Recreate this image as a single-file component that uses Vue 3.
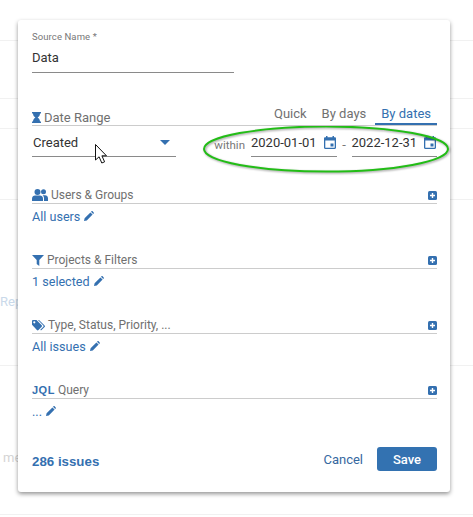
<script setup>
const sections = [
  { icon: 'users', label: 'Users & Groups', value: 'All users' },
  { icon: 'filter', label: 'Projects & Filters', value: '1 selected' },
  { icon: 'tags', label: 'Type, Status, Priority, ...', value: 'All issues' },
  { icon: 'jql', label: 'Query', value: '...' }
]
</script>

<template>
  <div class="page">
    <div class="bg">
      <div class="bg-row h40"></div>
      <div class="bg-row h58"></div>
      <div class="bg-row h30"></div>
      <div class="bg-row h71"></div>
      <div class="bg-row h166"><span class="ghost rep">Rep</span></div>
      <div class="bg-row h149"><span class="ghost me">me</span></div>
    </div>

    <div class="card">
      <label class="small-label">Source Name *</label>
      <div class="name-input">Data</div>

      <div class="range-head">
        <div class="range-title">
          <svg class="hourglass" width="9" height="11" viewBox="0 0 9 11"><path d="M0 0h9v1.400H8c0 2-1 3.200-2.400 4.100C7 6.400 8 7.600 8 9.600h1V11H0V9.600h1c0-2 1-3.200 2.400-4.100C2 4.600 1 3.400 1 1.400H0z"/></svg>
          <span>Date Range</span>
        </div>
        <div class="tabs">
          <span class="tab">Quick</span>
          <span class="tab">By days</span>
          <span class="tab active">By dates</span>
        </div>
      </div>

      <div class="range-row">
        <div class="select">
          <span>Created</span>
          <svg width="10" height="5" viewBox="0 0 10 5"><path d="M0 0h10L5 5z"/></svg>
        </div>
        <div class="dates">
          <span class="within">within</span>
          <div class="date">
            <span>2020-01-01</span>
            <svg class="cal" width="12" height="13" viewBox="0 0 12 13"><path d="M2 0h1.500v1.300h5V0H10v1.300h.8c.7 0 1.200.5 1.200 1.200v9.300c0 .7-.5 1.200-1.200 1.200H1.200C.5 13 0 12.500 0 11.800V2.500c0-.7.500-1.200 1.200-1.200H2zM1.300 4.500v7.200h9.400V4.500zM6.500 7.500h3v3h-3z" fill-rule="evenodd"/></svg>
          </div>
          <span class="dash">-</span>
          <div class="date">
            <span>2022-12-31</span>
            <svg class="cal" width="12" height="13" viewBox="0 0 12 13"><path d="M2 0h1.500v1.300h5V0H10v1.300h.8c.7 0 1.200.5 1.200 1.200v9.300c0 .7-.5 1.200-1.200 1.200H1.200C.5 13 0 12.500 0 11.800V2.500c0-.7.500-1.200 1.200-1.200H2zM1.300 4.500v7.200h9.400V4.500zM6.500 7.500h3v3h-3z" fill-rule="evenodd"/></svg>
          </div>
        </div>
      </div>

      <div class="sections">
        <section v-for="s in sections" :key="s.label" class="section">
          <div class="section-head">
            <svg v-if="s.icon === 'users'" class="ico" width="16" height="12" viewBox="0 0 16 12"><circle cx="5.500" cy="3" r="3"/><circle cx="11.500" cy="2.800" r="2.500"/><path d="M0 12V9.500C0 7.500 1.500 6.500 3 6.500h5c1.500 0 3 1 3 3V12z"/><path d="M12 12V9.300c0-1.200-.5-2.200-1.400-3H13c1.700 0 3 1.200 3 2.900V12z"/></svg>
            <svg v-else-if="s.icon === 'filter'" class="ico" width="12" height="11" viewBox="0 0 12 11"><path d="M0 0h12L7.300 5v6L4.700 9V5z"/></svg>
            <svg v-else-if="s.icon === 'tags'" class="ico" width="13" height="11" viewBox="0 0 13 11"><path d="M0 1.200C0 .5.500 0 1.200 0h3.300l5.200 5.200c.5.500.5 1.100 0 1.600l-3.200 3.200c-.5.500-1.100.5-1.600 0L0 4.700zM2.300 3.400a1.100 1.100 0 1 0 0-2.200 1.100 1.100 0 0 0 0 2.200z" fill-rule="evenodd"/><path d="M6 0h1l5.600 5.500c.5.500.5 1.100 0 1.600L9 10.500l-.7-.7 3-3c.4-.4.400-.8 0-1.200z"/></svg>
            <b v-else class="jql">JQL</b>
            <span>{{ s.label }}</span>
            <svg class="plus" width="9" height="9" viewBox="0 0 9 9"><rect width="9" height="9" rx="1.500"/><path d="M3.800 2h1.400v1.800H7v1.400H5.200V7H3.800V5.200H2V3.800h1.800z" fill="#fff"/></svg>
          </div>
          <div class="section-value">
            <span>{{ s.value }}</span>
            <svg class="pen" width="10" height="10" viewBox="0 0 10 10"><path d="M0 10l.6-2.800L6.400 1.400l2.200 2.200L2.800 9.400zM7 .8l.5-.5c.3-.3.800-.3 1.100 0l1.100 1.100c.3.300.3.800 0 1.100l-.5.500z"/></svg>
          </div>
        </section>
      </div>

      <div class="footer">
        <b class="count">286 issues</b>
        <div class="actions">
          <span class="cancel">Cancel</span>
          <span class="save">Save</span>
        </div>
      </div>
    </div>

    <svg class="ring" width="250" height="52" viewBox="0 0 250 52">
      <ellipse cx="124" cy="23" rx="122" ry="22.500" fill="none" stroke="#22bd16" stroke-width="2"/>
    </svg>

    <svg class="cursor" width="14" height="21" viewBox="0 0 14 21">
      <path d="M.5.500v15.500l3.600-3.200 2.700 6.200 2.800-1.200-2.700-6h4.600z" fill="#fff" stroke="#111" stroke-width="1"/>
    </svg>
  </div>
</template>

<style>
body { margin: 0; background: #fff; }
</style>

<style scoped>
.page {
  position: relative;
  width: 473px;
  height: 517px;
  overflow: hidden;
  font-family: Roboto, "Liberation Sans", sans-serif;
  color: #333;
  background: #fff;
}
.bg-row { border-bottom: 1px solid #f1f1f1; box-sizing: border-box; position: relative; }
.h40 { height: 41px; }
.h58 { height: 58px; }
.h30 { height: 30px; }
.h71 { height: 71px; }
.h166 { height: 166px; }
.h149 { height: 149px; }
.ghost { position: absolute; left: 0; font-size: 13px; }
.rep { top: 94px; color: #c9d9ea; }
.me { top: 84px; left: 3px; color: #d4d4d4; }
.card {
  position: absolute;
  left: 18px;
  top: 20px;
  width: 432px;
  height: 472px;
  box-sizing: border-box;
  padding: 11px 13px 0 14px;
  background: #fff;
  border-radius: 3px;
  box-shadow: 0 2px 4px rgba(0, 0, 0, .42);
  display: flex;
  flex-direction: column;
}
.small-label { font-size: 9.500px; line-height: 12px; color: #777; letter-spacing: .1px; }
.name-input {
  width: 202px;
  height: 26px;
  box-sizing: border-box;
  margin-top: 4px;
  padding-top: 2px;
  font-size: 13px;
  line-height: 18px;
  border-bottom: 1px solid #8a8a8a;
}
.range-head {
  margin-top: 32px;
  height: 21px;
  box-sizing: border-box;
  display: flex;
  justify-content: space-between;
  align-items: flex-start;
  border-bottom: 1px solid #ccc;
  font-size: 13px;
}
.range-title { display: flex; align-items: center; gap: 3px; color: #707070; height: 20px; padding-top: 2px; box-sizing: content-box; }
.hourglass { fill: #3470b0; }
.tabs { display: flex; gap: 15px; height: 21px; margin-top: -1px; }
.tab { color: #707070; line-height: 19px; height: 21px; box-sizing: border-box; }
.tab.active { color: #3470b0; border-bottom: 2px solid #3470b0; padding: 0 6px; margin-left: -6px; }
.range-row { display: flex; justify-content: space-between; height: 31px; }
.select {
  width: 144px;
  height: 31px;
  box-sizing: border-box;
  padding: 3px 6px 0 1px;
  display: flex;
  align-items: center;
  justify-content: space-between;
  border-bottom: 1px solid #8a8a8a;
  font-size: 13px;
}
.select svg { fill: #3470b0; }
.dates { display: flex; align-items: flex-start; font-size: 13px; }
.within { font-size: 11.500px; color: #777; margin: 12px 6px 0 0; }
.date {
  width: 85.500px;
  height: 31px;
  padding-top: 3px;
  box-sizing: border-box;
  display: flex;
  align-items: center;
  justify-content: space-between;
  border-bottom: 1px solid #8a8a8a;
}
.cal { fill: #3470b0; margin-right: 1px; }
.dash { color: #777; width: 15px; text-align: center; margin-top: 11px; }
.sections { display: flex; flex-direction: column; margin-top: 30px; gap: 24px; }
.section-head {
  height: 17px;
  box-sizing: border-box;
  display: flex;
  align-items: center;
  gap: 3px;
  border-bottom: 1px solid #ccc;
  font-size: 12px;
  color: #707070;
}
.ico { fill: #3470b0; flex: none; }
.jql { color: #3470b0; font-size: 11px; font-family: "Liberation Sans", sans-serif; font-weight: 700; letter-spacing: .5px; }
.plus { margin-left: auto; fill: #3470b0; }
.section-value {
  display: flex;
  align-items: center;
  gap: 4px;
  height: 24px;
  font-size: 12.600px;
  color: #3470b0;
}
.pen { fill: #3470b0; }
.footer {
  position: absolute;
  left: 14px;
  right: 13px;
  top: 427px;
  height: 24px;
  display: flex;
  align-items: center;
  justify-content: space-between;
}
.count { color: #3470b0; font-size: 13.300px; font-family: "Liberation Sans", sans-serif; margin-top: 5px; }
.actions { display: flex; align-items: center; gap: 14px; }
.cancel { font-size: 13px; color: #3568a0; }
.save {
  width: 60px;
  height: 24px;
  background: #3372b1;
  color: #fff;
  border-radius: 3px;
  font-size: 13px;
  font-weight: 500;
  display: flex;
  align-items: center;
  justify-content: center;
}
.ring {
  position: absolute;
  left: 202px;
  top: 126px;
  pointer-events: none;
  filter: drop-shadow(1px 1px 1px rgba(0, 0, 0, .4));
}
.cursor { position: absolute; left: 95px; top: 144px; }
</style>
